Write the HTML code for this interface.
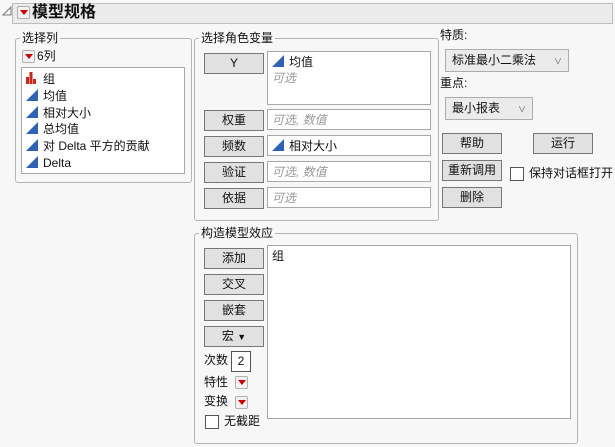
<!DOCTYPE html>
<html><head><meta charset="utf-8"><style>
*{box-sizing:border-box;margin:0;padding:0}
body{width:615px;height:447px;background:#f7f7f7;position:relative;overflow:hidden;font-family:"Liberation Sans","Noto Sans CJK SC",sans-serif;font-size:12px;color:#111}
.a{position:absolute}
.hdr{left:12px;top:3px;width:601px;height:21px;background:#ebebeb;border:1px solid #bdbdbd}
.dd{position:absolute;width:13px;height:13px;border:1px solid #b0b0b0;border-radius:2px;background:#f2f2f2}
.dd:after{content:"";position:absolute;left:2px;top:3px;border-left:4px solid transparent;border-right:4px solid transparent;border-top:5px solid #c00}
.grp{position:absolute;border:1px solid #b5b5b5;border-radius:3px}
.lbl{position:absolute;background:#f7f7f7;padding:0 2px;font-size:12px;line-height:14px}
.box{position:absolute;background:#fff;border:1px solid #a8a8a8}
.btn{position:absolute;width:60px;height:21px;background:#e1e1e1;border:1px solid #777;text-align:center;line-height:19px;font-size:12px}
.it{position:absolute;left:4px;font-size:12px;line-height:16px;height:16px;white-space:nowrap}
.tri{display:inline-block;width:12px;height:12px;vertical-align:-1px;margin-right:5px}
.ph{color:#999;font-style:italic}
.sel{position:absolute;height:23px;background:#ebebeb;border:1px solid #adadad;padding-left:6px;line-height:21px}
.chev{position:absolute;right:6px;top:1px;font-size:8px;color:#555}
.cb{position:absolute;width:14px;height:14px;background:#fff;border:1px solid #333}
</style></head><body>
<svg class="a" style="left:2px;top:6px" width="10" height="10"><path d="M1 9 L9 1 L9 9 Z" fill="none" stroke="#777"/></svg>
<div class="a hdr"></div>
<div class="dd" style="left:17px;top:6px"></div>
<div class="a" style="left:32px;top:3px;font-size:16px;font-weight:bold;line-height:20px">模型规格</div>

<div class="grp" style="left:15px;top:38px;width:177px;height:145px"></div>
<div class="lbl" style="left:20px;top:31px">选择列</div>
<div class="dd" style="left:22px;top:50px"></div>
<div class="a" style="left:37px;top:49px;line-height:14px">6列</div>
<div class="box" style="left:21px;top:67px;width:164px;height:107px">
<div class="it" style="top:3px"><svg class="tri" viewBox="0 0 12 12"><rect x="0" y="5" width="3" height="7" fill="#c8281c"/><rect x="3.5" y="0" width="3" height="12" fill="#c8281c"/><rect x="7" y="7" width="3" height="5" fill="#c8281c"/></svg>组</div>
<div class="it" style="top:20px"><svg class="tri" viewBox="0 0 12 12"><path d="M0 12 L12 0 L12 12Z" fill="#2f62b5"/></svg>均值</div>
<div class="it" style="top:37px"><svg class="tri" viewBox="0 0 12 12"><path d="M0 12 L12 0 L12 12Z" fill="#2f62b5"/></svg>相对大小</div>
<div class="it" style="top:53px"><svg class="tri" viewBox="0 0 12 12"><path d="M0 12 L12 0 L12 12Z" fill="#2f62b5"/></svg>总均值</div>
<div class="it" style="top:70px"><svg class="tri" viewBox="0 0 12 12"><path d="M0 12 L12 0 L12 12Z" fill="#2f62b5"/></svg>对 Delta 平方的贡献</div>
<div class="it" style="top:87px"><svg class="tri" viewBox="0 0 12 12"><path d="M0 12 L12 0 L12 12Z" fill="#2f62b5"/></svg>Delta</div>
</div>

<div class="grp" style="left:194px;top:38px;width:245px;height:183px"></div>
<div class="lbl" style="left:199px;top:31px">选择角色变量</div>
<div class="btn" style="left:204px;top:53px">Y</div>
<div class="box" style="left:267px;top:51px;width:164px;height:54px">
<div class="it" style="top:2px"><svg class="tri" viewBox="0 0 12 12"><path d="M0 12 L12 0 L12 12Z" fill="#2f62b5"/></svg>均值</div>
<div class="it ph" style="top:18px">可选</div></div>
<div class="btn" style="left:204px;top:110px">权重</div>
<div class="box" style="left:267px;top:109px;width:164px;height:21px"><div class="it ph" style="top:2px">可选, 数值</div></div>
<div class="btn" style="left:204px;top:136px">频数</div>
<div class="box" style="left:267px;top:135px;width:164px;height:21px"><div class="it" style="top:2px"><svg class="tri" viewBox="0 0 12 12"><path d="M0 12 L12 0 L12 12Z" fill="#2f62b5"/></svg>相对大小</div></div>
<div class="btn" style="left:204px;top:162px">验证</div>
<div class="box" style="left:267px;top:161px;width:164px;height:21px"><div class="it ph" style="top:2px">可选, 数值</div></div>
<div class="btn" style="left:204px;top:188px">依据</div>
<div class="box" style="left:267px;top:187px;width:164px;height:21px"><div class="it ph" style="top:2px">可选</div></div>

<div class="a" style="left:440px;top:28px;line-height:14px">特质:</div>
<div class="sel" style="left:445px;top:49px;width:124px">标准最小二乘法<span class="chev">&#8744;</span></div>
<div class="a" style="left:440px;top:76px;line-height:14px">重点:</div>
<div class="sel" style="left:445px;top:97px;width:88px">最小报表<span class="chev">&#8744;</span></div>
<div class="btn" style="left:442px;top:133px">帮助</div>
<div class="btn" style="left:533px;top:133px">运行</div>
<div class="btn" style="left:442px;top:160px">重新调用</div>
<div class="btn" style="left:442px;top:187px">删除</div>
<div class="cb" style="left:510px;top:167px;border-color:#555"></div>
<div class="a" style="left:529px;top:166px;line-height:14px">保持对话框打开</div>

<div class="grp" style="left:194px;top:233px;width:384px;height:211px"></div>
<div class="lbl" style="left:199px;top:226px">构造模型效应</div>
<div class="btn" style="left:204px;top:248px">添加</div>
<div class="btn" style="left:204px;top:274px">交叉</div>
<div class="btn" style="left:204px;top:300px">嵌套</div>
<div class="btn" style="left:204px;top:326px">宏 <span style="font-size:9px">&#9660;</span></div>
<div class="box" style="left:267px;top:245px;width:304px;height:174px"><div class="it" style="top:2px">组</div></div>
<div class="a" style="left:204px;top:353px;line-height:14px">次数</div>
<div class="box" style="left:231px;top:351px;width:20px;height:21px;border-color:#555;text-align:center;line-height:19px">2</div>
<div class="a" style="left:204px;top:375px;line-height:14px">特性</div>
<div class="dd" style="left:235px;top:376px"></div>
<div class="a" style="left:204px;top:394px;line-height:14px">变换</div>
<div class="dd" style="left:235px;top:396px"></div>
<div class="cb" style="left:205px;top:415px;border-color:#555"></div>
<div class="a" style="left:224px;top:414px;line-height:14px">无截距</div>
</body></html>
